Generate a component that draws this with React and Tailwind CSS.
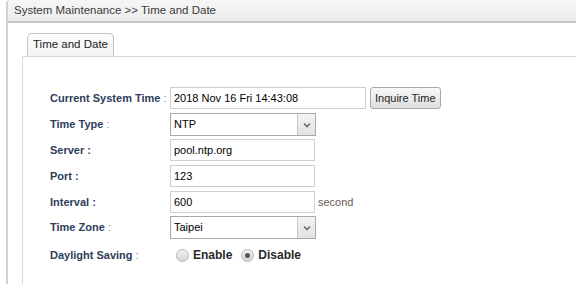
import React from "react";

function Label({ text, boldColon }) {
  return (
    <div className="w-[120px] shrink-0 whitespace-nowrap font-bold text-[#2e3d5a]">
      {text}
      <span className={boldColon ? "font-bold" : "font-normal text-[#8a8a8a]"}> :</span>
    </div>
  );
}

function Input({ value, w = "w-[145px]" }) {
  return (
    <div className={`${w} h-[22px] border border-[#cfcfcf] bg-white flex items-center px-[3px] text-black`}>
      {value}
    </div>
  );
}

function Select({ value }) {
  return (
    <div className="w-[146px] h-[23px] border border-[#a9a9a9] bg-white flex items-stretch text-black">
      <div className="flex-1 flex items-center px-[3px]">{value}</div>
      <div className="w-[18px] border-l border-[#c8c8c8] bg-gradient-to-b from-[#f4f4f4] to-[#e2e2e2] flex items-center justify-center">
        <svg width="8" height="6" viewBox="0 0 8 6">
          <path d="M1 1.5 L4 4.5 L7 1.5" fill="none" stroke="#6a6a6a" strokeWidth="1.6" />
        </svg>
      </div>
    </div>
  );
}

function Radio({ checked }) {
  return (
    <div className="w-[13px] h-[13px] rounded-full border border-[#b8b8b8] bg-gradient-to-b from-[#f2f2f2] to-[#d6d6d6] flex items-center justify-center">
      {checked && <div className="w-[5px] h-[5px] rounded-full bg-[#555]" />}
    </div>
  );
}

export default function App() {
  return (
    <div className="w-[576px] h-[284px] bg-white overflow-hidden text-[11px] font-['Liberation_Sans',Arial,sans-serif]">
      <div className="ml-[6px] h-full border-l-2 border-[#d2d2d2] rounded-tl-[4px] flex flex-col">
        <div className="h-[23px] shrink-0 bg-gradient-to-b from-[#f6f6f6] to-[#ececec] border-b-2 border-[#c6c6c6] rounded-tl-[4px] flex items-center pl-[6px] pt-[1px] text-[11.5px] text-[#3a3a3a]">
          System Maintenance &gt;&gt; Time and Date
        </div>
        <div className="pl-[14px] pt-[10px] flex-1 flex flex-col">
          <div className="flex items-end h-[23px] shrink-0">
            <div className="w-[5px] h-full" />
            <div className="w-[87px] h-[23px] border border-b-0 border-[#c4c4c4] rounded-t-[5px] bg-gradient-to-b from-[#fdfdfd] to-[#f3f3f3] flex items-center justify-center text-[11.5px] text-[#222]">
              Time and Date
            </div>
            <div className="flex-1" />
          </div>
          <div className="flex-1 border-l border-t border-[#d9d9d9] pl-[27px] pt-[30px] flex flex-col">
            <div className="flex items-center h-[22px]">
              <Label text="Current System Time" />
              <Input value="2018 Nov 16 Fri 14:43:08" w="w-[196px]" />
              <div className="ml-[4px] h-[22px] px-[4px] border border-[#a8a8a8] rounded-[3px] bg-gradient-to-b from-[#f8f8f8] to-[#dedede] flex items-center text-[#222]">
                Inquire Time
              </div>
            </div>
            <div className="flex items-center mt-[4px]">
              <Label text="Time Type" />
              <Select value="NTP" />
            </div>
            <div className="flex items-center mt-[3px]">
              <Label text="Server" boldColon />
              <Input value="pool.ntp.org" />
            </div>
            <div className="flex items-center mt-[4px]">
              <Label text="Port" boldColon />
              <Input value="123" />
            </div>
            <div className="flex items-center mt-[4px]">
              <Label text="Interval" boldColon />
              <Input value="600" />
              <span className="ml-[3px] text-[#6b5a5a]">second</span>
            </div>
            <div className="flex items-center mt-[3px]">
              <Label text="Time Zone" />
              <Select value="Taipei" />
            </div>
            <div className="flex items-center mt-[7px]">
              <Label text="Daylight Saving" />
              <div className="flex items-center ml-[6px] gap-[4px]">
                <Radio />
                <span className="font-bold text-[12px] text-[#2a2a2a]">Enable</span>
                <div className="w-[1px]" />
                <Radio checked />
                <span className="font-bold text-[12px] text-[#2a2a2a]">Disable</span>
              </div>
            </div>
          </div>
        </div>
      </div>
    </div>
  );
}
